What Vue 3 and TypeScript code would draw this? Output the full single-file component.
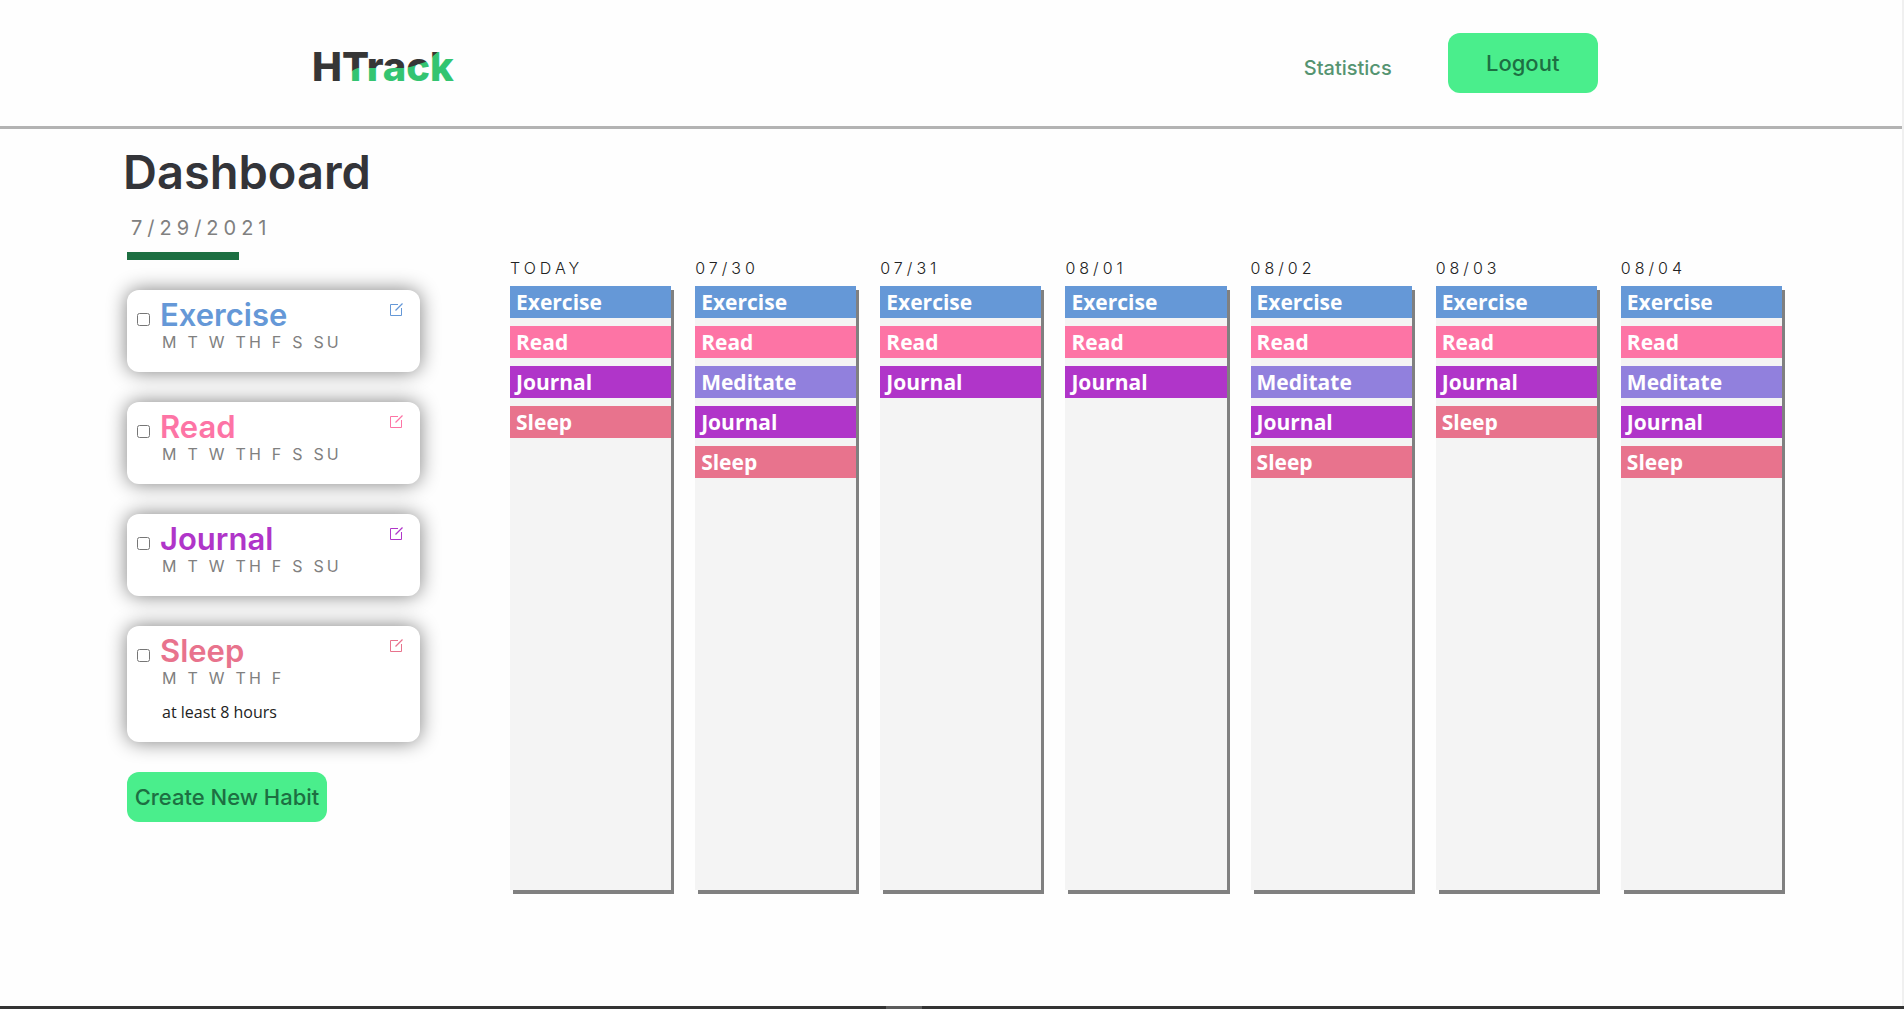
<script setup lang="ts">
import { ref } from 'vue'

interface Habit {
  name: string
  color: string
  days: string[]
  note?: string
  done: boolean
}

interface Day {
  label: string
  habits: string[]
}

const week = ['M', 'T', 'W', 'TH', 'F', 'S', 'SU']

const colors: Record<string, string> = {
  Exercise: '#6598d7',
  Read: '#fd74a5',
  Meditate: '#9180dd',
  Journal: '#b035c9',
  Sleep: '#e8738d',
}

const habits = ref<Habit[]>([
  { name: 'Exercise', color: colors.Exercise, days: week, done: false },
  { name: 'Read', color: colors.Read, days: week, done: false },
  { name: 'Journal', color: colors.Journal, days: week, done: false },
  { name: 'Sleep', color: colors.Sleep, days: week.slice(0, 5), note: 'at least 8 hours', done: false },
])

const days: Day[] = [
  { label: 'TODAY', habits: ['Exercise', 'Read', 'Journal', 'Sleep'] },
  { label: '07/30', habits: ['Exercise', 'Read', 'Meditate', 'Journal', 'Sleep'] },
  { label: '07/31', habits: ['Exercise', 'Read', 'Journal'] },
  { label: '08/01', habits: ['Exercise', 'Read', 'Journal'] },
  { label: '08/02', habits: ['Exercise', 'Read', 'Meditate', 'Journal', 'Sleep'] },
  { label: '08/03', habits: ['Exercise', 'Read', 'Journal', 'Sleep'] },
  { label: '08/04', habits: ['Exercise', 'Read', 'Meditate', 'Journal', 'Sleep'] },
]
</script>

<template>
  <div class="app">
    <div class="page">
      <header class="topbar">
        <svg class="logo" width="170" height="60" viewBox="0 0 170 60" role="img" aria-label="HTrack">
          <defs>
            <pattern id="logo-fill" width="170" height="60" patternUnits="userSpaceOnUse">
              <rect width="170" height="60" fill="#363636" />
              <path d="M43 60 V52 C44 43 46 37 54 35 H100 C110 34 117 30 127 27 L129 23 L136 17 H170 V60 Z" fill="#34c471" />
            </pattern>
          </defs>
          <text class="logo-text" x="8" y="48" fill="url(#logo-fill)">HTrack</text>
        </svg>
        <nav class="nav">
          <a class="nav-link" href="#statistics">Statistics</a>
          <button class="btn logout" type="button">Logout</button>
        </nav>
      </header>

      <main class="content">
        <aside class="sidebar">
          <h1 class="title">Dashboard</h1>
          <div class="panel">
            <p class="date">7/29/2021</p>
            <div class="rule"></div>
            <article v-for="(habit, i) in habits" :key="habit.name" class="card">
              <input :id="`habit-${i}`" v-model="habit.done" class="check" type="checkbox" />
              <div class="card-body">
                <label class="habit-name" :for="`habit-${i}`" :style="{ color: habit.color }">{{ habit.name }}</label>
                <div class="habit-days">
                  <span v-for="day in habit.days" :key="day">{{ day }}</span>
                </div>
                <p v-if="habit.note" class="note">{{ habit.note }}</p>
              </div>
              <button class="edit" type="button" :aria-label="`Edit ${habit.name}`" :style="{ color: habit.color }">
                <svg width="13" height="13" viewBox="0 0 13 13" fill="none" stroke="currentColor">
                  <path d="M8 1.5H0.5V12.5H11.5V5" />
                  <path d="M5.5 7.5L12.5 0.5" stroke-width="1.3" />
                </svg>
              </button>
            </article>
            <button class="btn create" type="button">Create New Habit</button>
          </div>
        </aside>

        <section class="calendar">
          <div v-for="day in days" :key="day.label" class="day">
            <h2 class="day-label">{{ day.label }}</h2>
            <ul class="day-list">
              <li v-for="name in day.habits" :key="name" class="entry" :style="{ backgroundColor: colors[name] }">
                {{ name }}
              </li>
            </ul>
          </div>
        </section>
      </main>
    </div>
    <div class="scrollbar"><div class="thumb"></div></div>
  </div>
</template>

<style>
body {
  background: #fefefe;
}
</style>

<style scoped>
.app {
  display: flex;
  flex-direction: column;
  min-height: 100vh;
  font-family: 'Inter', 'Open Sans', sans-serif;
  color: #333;
}

.page {
  flex: 1;
  border-right: 2px solid #f0f0f0;
}

.topbar {
  display: flex;
  align-items: center;
  justify-content: space-between;
  height: 126px;
  padding: 0 16%;
  border-bottom: 3px solid #b3b3b3;
}

.logo-text {
  font-size: 40px;
  font-weight: 800;
}

.nav {
  display: flex;
  align-items: center;
  gap: 56px;
}

.nav-link {
  padding-top: 10px;
  font-size: 20px;
  font-weight: 500;
  color: #559471;
  text-decoration: none;
}

.btn {
  padding: 0;
  border: 0;
  border-radius: 12px;
  background: #4aee8c;
  color: #1d6f42;
  font-family: inherit;
  font-size: 22px;
  font-weight: 500;
}

.logout {
  width: 150px;
  height: 60px;
}

.create {
  width: 200px;
  height: 50px;
  margin-top: 30px;
}

.content {
  display: flex;
  gap: 90px;
  padding: 0 120px 0 123px;
}

.sidebar {
  flex: none;
  width: 297px;
  padding-top: 15px;
}

.panel {
  padding-left: 4px;
}

.title {
  margin: 0;
  font-size: 47px;
  line-height: 56px;
  font-weight: 600;
  color: #333439;
}

.date {
  margin: 14px 0 10px;
  padding-left: 4px;
  font-size: 20px;
  line-height: 28px;
  letter-spacing: 5px;
  color: #808080;
}

.rule {
  width: 112px;
  height: 8px;
  background: #1d6f42;
}

.card {
  display: flex;
  align-items: flex-start;
  margin-top: 30px;
  padding: 8px 17px 20px 10px;
  border-radius: 12px;
  background: #fff;
  box-shadow: 0 0 20px gray;
}

.check {
  flex: none;
  width: 13px;
  height: 13px;
  margin: 15px 10px 0 0;
}

.card-body {
  flex: 1;
}

.habit-name {
  display: block;
  font-size: 31px;
  line-height: 34px;
  font-weight: 600;
}

.habit-days {
  display: flex;
  gap: 8px;
  padding-left: 2px;
  font-size: 16px;
  line-height: 20px;
  letter-spacing: 3px;
  color: #808080;
}

.note {
  margin: 14px 0 0;
  padding-left: 2px;
  font-family: 'Open Sans', sans-serif;
  font-size: 16px;
  line-height: 20px;
  color: #222;
}

.edit {
  display: flex;
  margin-top: 5px;
  padding: 0;
  border: 0;
  background: none;
}

.calendar {
  display: flex;
  flex: 1;
  gap: 24px;
  padding-top: 129px;
}

.day {
  flex: 1;
}

.day-label {
  margin: 0 0 8px;
  font-size: 16px;
  line-height: 20px;
  font-weight: 300;
  letter-spacing: 4px;
  color: #222;
}

.day-list {
  display: flex;
  flex-direction: column;
  gap: 8px;
  min-height: 604px;
  margin: 0;
  padding: 0;
  list-style: none;
  background: #f4f4f4;
  box-shadow: 3px 4px 0 gray;
}

.entry {
  padding-left: 6px;
  font-family: 'Open Sans', sans-serif;
  font-size: 21px;
  line-height: 32px;
  font-weight: 700;
  color: #fff;
}

.scrollbar {
  height: 3px;
  background: #333;
}

.thumb {
  width: 36px;
  height: 3px;
  margin: 0 auto;
  background: #5c5c5c;
  translate: -48px 0;
}
</style>
